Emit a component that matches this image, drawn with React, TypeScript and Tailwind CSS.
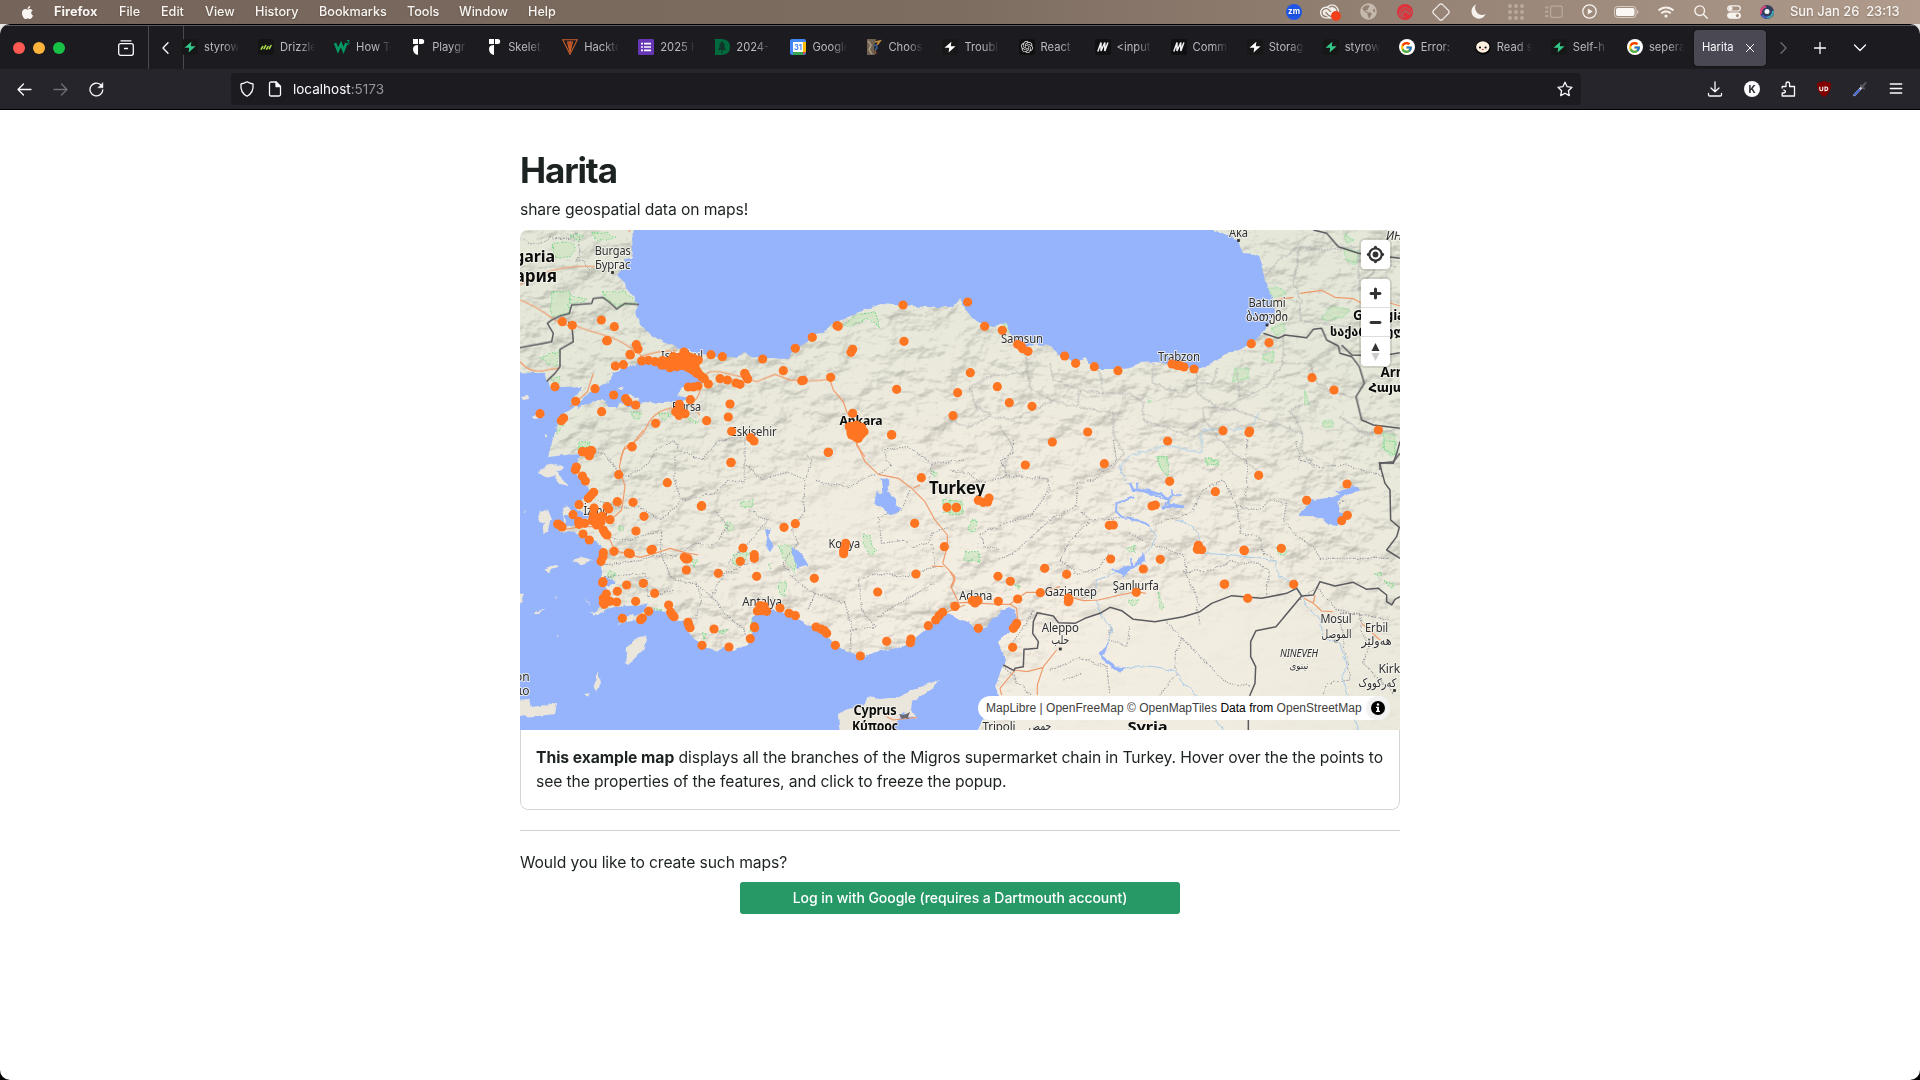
import React from 'react';
import { FaApple, FaGlobeAmericas, FaWifi } from 'react-icons/fa';
import { FcGoogle } from 'react-icons/fc';
import { SiOpenai, SiAdobecreativecloud } from 'react-icons/si';

/* ---------- menu bar ---------- */

const menus: [string, string][] = [
  ['File', 'w-[42px]'],
  ['Edit', 'w-[44px]'],
  ['View', 'w-[50px]'],
  ['History', 'w-[64px]'],
  ['Bookmarks', 'w-[88px]'],
  ['Tools', 'w-[52px]'],
  ['Window', 'w-[69px]'],
  ['Help', 'w-[40px]'],
];

const statusItems: [string, React.ReactNode][] = [
  ['w-[36px]', <span className="flex size-4 items-center justify-center rounded-full bg-[#1f56e8] pb-0.5 text-[8px] font-bold leading-none text-white">zm</span>],
  ['w-[34px]', (
    <span className="relative flex">
      <SiAdobecreativecloud className="size-[19px] text-[#f3eeea]" />
      <i className="absolute -right-0.5 bottom-0 size-2.5 rounded-full bg-[#f0401c]" />
    </span>
  )],
  ['w-[44px]', <FaGlobeAmericas className="size-[17px] text-[#c5b8ad]" />],
  ['w-[30px]', (
    <svg className="size-4" viewBox="0 0 16 16" fill="none" stroke="#9a7066" strokeWidth=".9">
      <circle cx="8" cy="8" r="8" fill="#e0303c" stroke="none" />
      <path d="M3 12A6 6 0 1 1 14.500 10M5 14A4.500 4.500 0 1 1 13 11M8 14A3 3 0 1 1 11.500 11" />
    </svg>
  )],
  ['w-[42px]', (
    <svg className="size-[18px]" viewBox="0 0 18 18" fill="none" stroke="#f3eeea" strokeWidth="1.3">
      <path d="M7.6 1.4Q9 .4 10.4 1.4L16.6 7.6Q17.6 9 16.6 10.4L10.4 16.6Q9 17.6 7.6 16.6L1.4 10.4Q.4 9 1.4 7.6Z" />
    </svg>
  )],
  ['w-[32px]', (
    <svg className="size-[15px]" viewBox="0 0 15 15"><path d="M5 .6A7.3 7.3 0 1 0 14.6 10 7 7 0 0 1 5 .6Z" fill="#f6f2ee" /></svg>
  )],
  ['w-[44px]', (
    <span className="grid grid-cols-3 gap-0.5">
      {Array.from({ length: 9 }, (_, i) => <i key={i} className="size-1 rounded-full bg-[#b9a99d]" />)}
    </span>
  )],
  ['w-[32px]', (
    <svg className="h-3.5 w-[18px]" viewBox="0 0 18 14" fill="none" stroke="#b9a99d" strokeWidth="1.3">
      <rect x="5.6" y="1.2" width="11.6" height="11.2" rx="1.5" /><path d="M.2 2.5h3M.2 6.8h3M.2 11.1h3" strokeWidth="2" />
    </svg>
  )],
  ['w-[38px]', (
    <svg className="size-[15px]" viewBox="0 0 15 15"><circle cx="7.5" cy="7.5" r="6.7" fill="none" stroke="#f6f2ee" strokeWidth="1.3" /><path d="M5.8 4.5v6l4.9-3z" fill="#f6f2ee" /></svg>
  )],
  ['w-[36px]', (
    <svg className="h-3 w-[25px]" viewBox="0 0 25 12"><rect x=".5" y=".5" width="21.5" height="11" rx="3" fill="none" stroke="#d6ccc4" /><rect x="2" y="2" width="18.5" height="8" rx="1.8" fill="#faf7f4" /><path d="M23.2 4v4q1.3-.6 1.3-2t-1.3-2Z" fill="#d6ccc4" /></svg>
  )],
  ['w-[44px]', <FaWifi className="size-4 text-[#f6f2ee]" />],
  ['w-[26px]', (
    <svg className="size-3.5" viewBox="0 0 14 14" fill="none" stroke="#f6f2ee" strokeWidth="1.4" strokeLinecap="round"><circle cx="5.7" cy="5.7" r="4.8" /><path d="m9.3 9.3 4 4" /></svg>
  )],
  ['w-[40px]', (
    <svg className="h-3.5 w-3.5" viewBox="0 0 14 14" fill="none" stroke="#f6f2ee" strokeWidth="1.2"><rect x=".7" y=".8" width="12.6" height="5.2" rx="2.6" /><circle cx="3.5" cy="3.4" r="1.5" fill="#f6f2ee" /><rect x=".7" y="8" width="12.6" height="5.2" rx="2.6" fill="#f6f2ee" /><circle cx="10.4" cy="10.6" r="1.6" fill="#a48f81" stroke="none" /></svg>
  )],
  ['w-[26px]', (
    <svg className="size-3.5" viewBox="0 0 14 14">
      <circle cx="7" cy="7" r="7" fill="#33405e" />
      <path d="M1 9A6 6 0 0 1 6 1.500" fill="none" stroke="#e0457f" strokeWidth="2.200" />
      <path d="M13 6a6 6 0 0 1-6 6.500" fill="none" stroke="#3fa9b5" strokeWidth="2" />
      <path d="M2 10a6 6 0 0 0 5 2.600" fill="none" stroke="#4a5fd0" strokeWidth="2" />
      <circle cx="7" cy="6.500" r="2.500" fill="#f4f7fb" />
    </svg>
  )],
];

function MenuBar() {
  return (
    <div className="flex h-6 shrink-0 items-center bg-linear-to-r from-[#75645a] via-[#7d6d60] to-[#b09b8c] text-[12.6px] font-medium text-[#f8f5f2] [text-shadow:0_1px_2px_rgba(0,0,0,.25)]">
      <FaApple className="ml-5 size-[15px]" />
      <span className="ml-[19px] w-[65px] text-[12.800px] font-bold">Firefox</span>
      {menus.map(([m, w]) => <span key={m} className={w}>{m}</span>)}
      <div className="ml-auto flex items-center">
        {statusItems.map(([w, icon], i) => <span key={i} className={`flex items-center justify-center ${w}`}>{icon}</span>)}
        <span className="ml-2.5 w-[130px] whitespace-pre text-[12.900px]">Sun Jan 26  23:13</span>
      </div>
    </div>
  );
}

/* ---------- favicons ---------- */

const Bolt = ({ c }: { c: string }) => (
  <svg className="size-4" viewBox="0 0 16 16"><rect width="16" height="16" rx="3" fill="#171717" /><path d="M9.4 2.800 2.500 8.800h4.700L6.600 13.400 13.600 7.200H8.800Z" fill={c} /></svg>
);
const Drizzle = () => (
  <svg className="size-4" viewBox="0 0 16 16"><rect width="16" height="16" rx="3" fill="#141414" /><path d="m3.2 10.2 1.5-2.7M6 9.6l1.7-3.1M8.6 10.2l1.5-2.7M11.3 9.6 13 6.5" stroke="#b5e84c" strokeWidth="1.5" strokeLinecap="round" /></svg>
);
const W3 = () => (
  <svg className="size-4" viewBox="0 0 16 16" fill="none" stroke="#059862"><path d="m1 4 3 7.500L7 5l2.500 6.500L12.400 4" strokeWidth="2.600" /><path d="M13 1.500h2.200l-1.300 1.700q1.400 0 1.400 1.200t-2.300 1" strokeWidth=".9" /></svg>
);
const Fmark = () => (
  <svg className="size-4" viewBox="0 0 16 16" fill="#fff"><path d="M3 0h5v5H3zM9 0h2.700A2.500 2.500 0 0 1 11.700 5H9zM8 6v10q-5-1-5-6 0-4 5-4Z" /></svg>
);
const Hack = () => (
  <svg className="size-4" viewBox="0 0 16 16" fill="none" stroke="#c9602c" strokeWidth="1.100"><path d="M.7.7h14.600L8 15.300Z" /><path d="M5.600 3 8 13l2.400-10ZM8 2v8" fill="#a3341c" /></svg>
);
const Forms = () => (
  <svg className="size-4" viewBox="0 0 16 16"><rect width="16" height="16" rx="1.500" fill="#6636b5" /><path d="M3 4.700h2M6 4.700h7M3 8h2M6 8h7M3 11.300h2M6 11.300h7" stroke="#fff" strokeWidth="1.700" /></svg>
);
const DPine = () => (
  <svg className="size-4" viewBox="0 0 16 16"><path d="M0 0h7q9 0 9 8t-9 8H0l1-1V1Z" fill="#00693e" /><path d="m8 2 3 4-1 1 2 4H8.500v3h-1v-3H4l2-4-1-1Z" fill="#12352a" /></svg>
);
const Calendar = () => (
  <svg className="size-4" viewBox="0 0 16 16"><rect width="16" height="16" rx="2" fill="#4285f4" /><path d="M13 3h3v10h-3z" fill="#fbbc04" /><path d="M3 13h10v3H3z" fill="#34a853" /><path d="M13 13h3l-3 3z" fill="#ea4335" /><path d="M3 3h10v10H3z" fill="#fff" /><text x="8" y="11" fontSize="7.500" fontWeight="700" textAnchor="middle" fill="#4285f4">31</text></svg>
);
const Painting = () => (
  <svg className="size-4" viewBox="0 0 16 16"><path d="M1 0h9l-2 7 1 9H1Z" fill="#6f6153" /><path d="m2 2 3 4-2 5 3 4" stroke="#a9977e" strokeWidth="1.600" fill="none" /><path d="m9 3 5-1-3 4" stroke="#c28a3c" strokeWidth="1.700" fill="none" /><path d="m8 7 2-1 1 3-2 2" stroke="#35598a" strokeWidth="1.800" fill="none" /><path d="m9 11 1 4" stroke="#8a5a34" strokeWidth="1.300" fill="none" /></svg>
);
const Mdn = () => (
  <svg className="size-4" viewBox="0 0 16 16"><rect width="16" height="16" rx="2" fill="#101013" /><path d="M2.800 12.500 6 3.500v8.500L9.800 3.500v8.500L12.900 3.500" fill="none" stroke="#f2f2f2" strokeWidth="1.500" strokeLinejoin="bevel" /></svg>
);
const Gpt = () => <span className="flex size-4 items-center justify-center rounded-[3px] bg-[#101010]"><SiOpenai className="size-3 text-[#e8e8e8]" /></span>;
const G = () => <span className="flex size-4 items-center justify-center rounded-full bg-white"><FcGoogle className="size-[13px]" /></span>;
const Bun = () => (
  <svg className="size-4" viewBox="0 0 16 16"><ellipse cx="8" cy="8.600" rx="7.800" ry="6.900" fill="#000" /><ellipse cx="7.800" cy="8" rx="6.700" ry="5.700" fill="#fbf0df" /><circle cx="5" cy="8.500" r="1.100" /><circle cx="10.600" cy="8.500" r="1.100" /><path d="M6.500 10q1.300 1.800 2.600 0Z" fill="#b71422" /></svg>
);

const green = '#34c98b';
const tabs: [React.ReactNode, string][] = [
  [<Bolt c={green} />, 'styrow'], [<Drizzle />, 'Drizzle'], [<W3 />, 'How To'], [<Fmark />, 'Playgr'], [<Fmark />, 'Skelet'],
  [<Hack />, 'Hackto'], [<Forms />, '2025 H'], [<DPine />, '2024-'], [<Calendar />, 'Google'], [<Painting />, 'Choos'],
  [<Bolt c="#fff" />, 'Troubl'], [<Gpt />, 'React'], [<Mdn />, '<input'], [<Mdn />, 'Comm'], [<Bolt c="#fff" />, 'Storag'],
  [<Bolt c={green} />, 'styrow'], [<G />, 'Error: '], [<Bun />, 'Read s'], [<Bolt c={green} />, 'Self-h'], [<G />, 'sepera'],
];

const ln = { fill: 'none', stroke: '#fbfbfe', strokeWidth: 1.3, strokeLinecap: 'round', strokeLinejoin: 'round' } as const;

function TabBar() {
  return (
    <div className="flex h-11 items-center border-t border-[#5a595f] bg-[#1c1b20] text-[11.200px] text-[#b9b9be]">
      <div className="ml-[13px] flex gap-2">
        <i className="size-3 rounded-full bg-[#ff5a52]" />
        <i className="size-3 rounded-full bg-[#fdb43c]" />
        <i className="size-3 rounded-full bg-[#18c146]" />
      </div>
      <svg className="ml-[53px] size-4" viewBox="0 0 16 16" {...ln}><path d="M3 .8h10" /><rect x=".7" y="3.600" width="14.600" height="11.700" rx="2" /><path d="M6.500 8.500h3" /></svg>
      <div className="ml-[14px] flex h-full w-9 items-center justify-center border-x border-[#4a494f]">
        <svg className="size-3" viewBox="0 0 12 12" {...ln}><path d="M8 .7 3 6l5 5.300" /></svg>
      </div>
      <div className="-ml-0.5 flex">
        {tabs.map(([icon, label], i) => (
          <div key={i} className="flex w-[76.050px] shrink-0 items-center gap-1.5">
            {icon}
            <span className="w-[36px] overflow-hidden whitespace-nowrap [mask-image:linear-gradient(to_right,#000_55%,transparent_98%)]">{label}</span>
          </div>
        ))}
      </div>
      <div className="-ml-[9px] flex h-9 w-[72px] items-center rounded bg-[#4a4853] pl-2 text-[#fbfbfe] shadow-[0_0_2px_rgba(0,0,0,.6)]">
        Harita
        <svg className="ml-auto mr-3 size-2" viewBox="0 0 8 8" {...ln} strokeWidth={1}><path d="m.3.3 7.400 7.400M7.700.3.3 7.700" /></svg>
      </div>
      <svg className="ml-3 size-3" viewBox="0 0 12 12" {...ln} stroke="#6d6c73"><path d="m3 .7 5 5.300-5 5.300" /></svg>
      <svg className="ml-6 size-3" viewBox="0 0 12 12" {...ln}><path d="M6 .5v11M.5 6h11" /></svg>
      <svg className="ml-[28px] size-3" viewBox="0 0 12 12" {...ln}><path d="m.5 3 5.500 5.500L11.500 3" /></svg>
    </div>
  );
}

function Toolbar() {
  return (
    <div className="flex h-10 items-center bg-[#26252b]">
      <svg className="ml-[17px] size-[15px]" viewBox="0 0 15 15" {...ln}><path d="M14 7.500H1M6.500 2 1 7.500 6.500 13" /></svg>
      <svg className="ml-[21px] size-[15px]" viewBox="0 0 15 15" {...ln} stroke="#6f6e75"><path d="M1 7.500h13M8.500 2 14 7.500 8.500 13" /></svg>
      <svg className="ml-[21px] size-[15px]" viewBox="0 0 15 15" {...ln}><path d="M13.800 8a6.400 6.400 0 1 1-2.300-5.400" /><path d="M14 .8v5H9Z" fill="#fbfbfe" strokeWidth=".4" /></svg>
      <div className="ml-[127px] flex h-8 w-[1350px] items-center rounded bg-[#1c1b20] text-[13.500px]">
        <svg className="ml-2 size-4" viewBox="0 0 16 16" {...ln}><path d="M8 .8q3 1.700 6 2.200Q15 11.500 8 15.200 1 11.500 2 3 5 2.500 8 .8Z" /></svg>
        <svg className="ml-3 size-4" viewBox="0 0 16 16" {...ln}><path d="M4 1h5l4.500 4.500V13.500q0 1.500-1.500 1.500H4q-1.500 0-1.500-1.500V2.500Q2.500 1 4 1Z" /><path d="M9 1v4.500h4.500Z" fill="#fbfbfe" /></svg>
        <span className="ml-2.5 text-[#fbfbfe]">localhost<span className="text-[#96959b]">:5173</span></span>
        <svg className="ml-auto mr-2 size-4" viewBox="0 0 16 16" {...ln}><path d="m8 1.200 2.100 4.500 4.900.6-3.600 3.400.9 4.900L8 12.200l-4.300 2.400.9-4.900L1 6.300l4.900-.6Z" /></svg>
      </div>
      <div className="ml-[126px] flex items-center gap-5">
        <svg className="size-4" viewBox="0 0 16 16" {...ln}><path d="M8 .8v9.700M4 7l4 3.700L12 7M1.500 12.500v1.200q0 1.300 1.300 1.300h10.400q1.300 0 1.300-1.300v-1.200" /></svg>
        <span className="ml-[1px] flex size-4 items-center justify-center rounded-full bg-[#fbfbfe] text-[10px] font-bold text-[#26252b]">K</span>
        <svg className="size-4" viewBox="0 0 16 16" {...ln}><path d="M2.200 7V5.500H6V3q0-2 1.800-2t1.800 2v2.500h4.900V15H2.200v-3h1.600q1.600 0 1.600-1.400T3.800 9.200" /></svg>
        <svg className="size-4" viewBox="0 0 16 16"><path d="M8 0q4 1.700 7 1.700Q15.500 12 8 16 .5 12 1 1.700 4 1.700 8 0Z" fill="#800000" /><path d="M3.800 5.800v2.400q0 1.500 1.500 1.500t1.500-1.500V5.800M9 6v3.600h.8q2 0 2-1.800T9.800 6Z" fill="none" stroke="#fff" strokeWidth="1.100" /></svg>
        <svg className="size-4" viewBox="0 0 16 16"><path d="m2.500 14 7-7.500" stroke="#cfd5e2" strokeWidth="2.400" strokeLinecap="round" /><path d="m2.600 13.800 4.600-5" stroke="#4062d8" strokeWidth="1.800" strokeLinecap="round" /><path d="m9 4.500 3 3M10.500 5.500l3-3.500" stroke="#55555a" strokeWidth="2.200" strokeLinecap="round" /></svg>
        <svg className="size-4" viewBox="0 0 16 16" {...ln}><path d="M2.300 3h11.400M2.300 7.500h11.400M2.300 12h11.400" /></svg>
      </div>
    </div>
  );
}

/* ---------- map ---------- */

/* Map features are kept in four sheets, three units to a pixel, each with its own origin. */
type Sheet = { at: string; dots: string; roads: string[]; provinces: string[]; borders: string[]; parks: string[]; rivers: string[]; lakes: string[]; clusters: string[] };

const sheets: Sheet[] = [
  {
    at: 'translate(510 140) scale(.33333)',
    dots: '157,545 187,556 274,540 313,560 290,602 292,602 379,614 384,627 361,645 360,643 316,678 340,674 395,663 415,661 435,665 455,675 470,665 490,650 522,636 500,680 520,670 540,665 565,660 545,685 560,700 575,710 583,716 595,732 530,650 480,683 457,662 550,655 535,741 550,741 564,738 603,644 637,650 758,657 820,692 880,721 875,722 962,712 704,700 713,717 708,708 630,716 652,720 678,729 690,733 856,625 907,592 981,557 985,559 1179,495 1182,604 1028,628 1023,637 135,740 255,746 197,784 311,765 347,776 354,785 377,795 90,821 161,834 154,842 275,815 437,850 541,779 508,793 508,805 497,815 507,826 525,821 590,842 660,792 655,831 665,874 722,893 732,903 366,920 217,935 243,932 237,945 955,937 1145,884 1028,820 1160,748 1343,758 1329,827 1018,860 1030,875 1055,862 1062,875 1050,885 1045,895 1025,885 1040,855 1035,870 663,967',
    clusters: ['M445 662 500 640 530 632 572 652 568 680 592 715 565 715 520 690 450 688Z', 'M1008 852 1040 842 1073 868 1066 890 1045 909 1030 903 1010 885Z'],
    roads: ['M30 480Q80 500 120 530T190 555Q240 575 300 590 350 610 405 655', 'M30 433Q100 390 170 383T255 380', 'M30 665Q60 700 100 692T148 684', 'M250 700 232 755 195 790 180 800', 'M390 650Q450 630 500 632', 'M590 715Q580 690 630 695L700 712 740 725 795 703 840 720 880 722 920 722 960 718 970 750 1000 785 1010 815 1030 850 1040 915 1065 950', 'M570 750Q565 780 540 790T480 805Q430 815 410 860T345 920L330 960', 'M540 790 570 825', 'M355 275Q362 270 362 268'],
    provinces: ['M40 300Q80 330 120 290 170 310 200 280 220 330 200 360 250 370 230 420 270 440', 'M30 440Q60 480 90 470 100 510 140 520M30 530Q70 540 80 580L60 600 30 610', 'M235 500Q250 560 230 600T240 700 225 740 210 745', 'M300 660Q340 600 330 590T400 575', 'M590 650Q620 690 600 700T560 760 700 750 760 770 790 850 870 850 900 870', 'M640 650Q720 690 760 660M690 770 720 810 700 850 640 850', 'M830 700Q870 720 890 745L900 760 960 740M850 660Q930 640 940 620L980 590 1090 570', 'M900 870 930 920 890 960M980 590 990 650 960 690 1010 760 1120 760 1160 790 1210 790 1230 720 1180 680 1130 690 1040 700', 'M1240 500Q1260 540 1230 580L1270 640 1290 680 1345 660', 'M1160 790 1180 830 1110 890 1120 950M1210 790 1280 840 1345 850M1345 700 1300 720 1280 780', 'M410 810Q430 860 480 870T560 880 620 850M480 870 470 940 510 950M700 850Q690 900 700 940', 'M120 280 110 340 160 370 190 420M200 280 280 300 350 295', 'M395 690 425 718', 'M1245 500 1260 600 1180 640 1120 650'],
    borders: ['M30 623 60 617 100 610 125 605 130 580 112 550 125 540 150 528 178 520 185 495 245 490 250 475 278 472 300 488 320 507 345 490 387 493', 'M175 545 187 570 190 605 150 628 150 680 135 700 110 724'],
    parks: ['M130 455h50l-5 65-45 10-10-30z', 'M185 465 230 480 210 490 180 490z', 'M280 455 340 455 380 490 320 500 285 475z', 'M130 310 180 305 200 325 180 350 140 355 130 335z', 'M245 280h50l20 15-50 5z', 'M90 655 150 630 140 680 110 670z', 'M1000 555 1040 525 1095 515 1110 560 1070 535 1010 562z', 'M445 820 485 822 460 840z', 'M360 815 395 820 385 838 365 830z', 'M205 910 240 905 235 925 205 928z', 'M140 800 158 800 145 830 160 850 140 880 130 850z', 'M530 830 565 845 545 850z', 'M180 285 220 285 205 305z', 'M120 715 150 710 145 735z'],
    rivers: [], lakes: [],
  },
  {
    at: 'translate(950 220) scale(.33333)',
    dots: '53,246 104,319 157,331 203,373 213,378 218,386 234,394 344,408 377,430 433,440 504,452 666,432 680,436 690,437 702,441 732,447 904,371 957,368 1086,473 1152,510 1285,630 61,458 142,500 178,548 246,559 413,636 307,666 226,735 463,731 653,663 819,632 899,633 897,638',
    clusters: [],
    roads: ['M975 240Q1000 235 1030 232M1050 220 1115 211 1155 232 1210 236 1235 250 1290 240 1350 258'],
    provinces: ['M200 365Q240 400 230 450L240 500 300 540 380 560 390 510 460 520 450 460 430 430', 'M230 455 120 470 60 500 80 560 130 590 190 600 300 545', 'M390 560 490 580 490 640 520 700 490 745M460 520 540 520 580 550 580 600 700 640 760 600 760 560 860 570', 'M610 430 610 490 690 520 740 490 790 490 800 440M740 450 740 520 800 560', 'M860 450 870 540 950 500 1000 430 1000 340M1000 430 1080 430 1100 490 1170 520 1230 540', 'M860 570 940 600 1060 640 1020 570 1100 540M940 180Q970 130 1000 110L1050 80 1120 90 1220 80', 'M1050 80 1030 190 1060 250M1000 230 1050 250 1050 300 1100 310 1200 320 1230 350M1225 90 1225 210 1280 140 1340 140', 'M150 620 190 680 160 745M0 600 60 620 120 590M300 430 310 480 390 510', 'M1060 640 1050 690 1100 750M1170 590 1240 640 1350 630M760 600 850 700 920 750'],
    borders: ['M940 340 985 355 1005 345 1070 353 1090 328 1115 325 1130 360 1165 378 1170 400 1205 410 1228 440 1243 490 1218 530 1235 600 1270 615 1350 625', 'M1175 375 1205 405 1290 408 1350 398', 'M1090 30 1130 40 1165 80 1225 100 1350 115', 'M1350 700 1330 725 1290 730 1290 750'],
    parks: ['M955 205 985 205 1010 220 970 235z', 'M1115 290 1150 260 1200 270 1180 290 1130 300z', 'M855 445 895 445 895 475 848 485z', 'M940 405 970 395 965 425 938 418z', 'M160 310 185 315 185 340 165 330z', 'M1185 85 1225 95 1220 130 1190 125z', 'M1118 605 1148 603 1145 622 1118 618z', 'M1300 640 1335 645 1340 700 1320 710 1298 680z', 'M1065 515 1080 550 1060 550z', 'M965 325 1000 310 1005 330 980 345z', 'M622 710 652 712 640 750 630 740z', 'M765 715 805 722 800 738 770 732z', 'M1185 45 1215 60 1190 70z', 'M590 540 605 545 598 550z'],
    rivers: ['M925 580Q910 630 860 628T760 630Q745 640 755 670T740 695L660 678Q600 690 560 700T510 745'],
    lakes: [],
  },
  {
    at: 'translate(515 430) scale(.33333)',
    dots: '351,50 648,98 940,67 1130,15 203,65 220,64 230,62 223,77 184,111 181,119 202,138 211,153 311,134 457,158 560,227 559,229 236,187 228,196 220,205 307,215 354,217 192,224 237,234 276,230 281,237 387,259 174,254 285,269 363,303 128,282 134,285 141,291 191,274 192,283 209,280 235,255 235,265 252,265 262,258 232,272 245,285 258,275 204,312 223,330 265,300 270,309 276,315 265,368 264,380 258,394 297,364 340,369 346,371 408,360 412,358 508,382 513,387 519,386 514,420 684,354 676,394 718,374 718,385 725,439 610,430 807,292 841,281 992,340 990,352 986,362 986,371 898,445 1088,486 1203,432 1199,280 1219,143 1296,232 1324,232 1288,350 1320,529 1283,547 1272,557 1262,570 1240,587 1188,627 1186,638 1115,634 1036,678 961,646 903,591 918,597 928,602 935,610 841,557 822,550 795,534 735,527 747,528 727,543 755,544 740,542 718,590 719,593 706,626 642,651 561,646 597,597 519,577 521,585 525,593 467,547 472,555 477,560 461,525 419,490 385,460 335,465 307,484 264,455 263,458 274,492 265,505 265,518 268,523 285,514 305,516 362,514 322,565 401,544 382,564 377,569',
    clusters: ['M225 250 265 250 270 275 245 298 222 280Z'],
    roads: ['M385 0 350 45 325 60 313 110 330 170 320 240 285 272', 'M150 298 200 290 245 290 285 330 300 362 375 382 420 370 465 355 510 368 550 375', 'M1025 40 1050 95 1090 133 1150 145 1190 175 1230 215 1260 270 1297 315 1297 350 1283 400 1320 440 1308 470 1330 515', 'M1195 175 1215 165M1250 408 1285 410M1260 560 1350 525', 'M1115 860 1135 870 1205 862'],
    provinces: ['M225 70Q280 60 310 130L340 140 400 100 420 60 480 30 490 60 560 90 600 40 660 20', 'M480 80 480 160 500 210 600 190 640 150 690 160 690 80 690 20', 'M690 100 740 150 820 125 870 150 890 90 860 60M870 150 865 250 830 300 850 340', 'M900 155 1000 170 1060 140 1080 130M1185 180 1160 240 1090 260 1100 340 1170 330 1190 350 1240 340 1250 310 1300 290', 'M240 210 330 235 370 230 440 270 500 215M440 300 340 330 290 325M440 300 440 370 480 380 540 340 600 345 640 290 600 240', 'M250 405 320 400 440 375 460 430 480 450 540 460 590 500 630 430 700 400', 'M270 440 390 430 400 500 480 480M700 240 760 270 700 340 640 400M850 340 800 400 840 450 900 490 880 540', 'M900 490 990 520 1010 590 1005 660M1030 450 1080 430 1180 440 1260 410 1250 340M1030 450 1040 540 1080 590 1010 600M1090 560 1150 520 1260 460', 'M1100 60 1130 110 1090 130M1100 60 1180 50 1250 100 1350 90M1250 100 1240 160M590 500 640 560 690 600 700 640', 'M540 460 560 500 540 570'],
    borders: [],
    parks: ['M675 220 718 212 712 230 682 230z', 'M1045 312 1068 318 1070 345 1088 362 1060 375 1045 340z', 'M790 348 825 345 840 385 838 425 815 400z', 'M790 460 812 452 815 470 805 495 790 480z', 'M655 375 700 368 690 390 655 405z', 'M530 390 552 385 540 410z', 'M635 275 657 290 645 302 633 290z', 'M280 422 302 430 295 442 278 438z', 'M1283 210 1338 215 1330 245 1290 250z', 'M1245 125 1268 130 1255 140z', 'M190 55 210 35 228 50z', 'M315 285 330 290 325 302 312 300z', 'M605 605 640 598 625 608z', 'M712 560 718 600 705 605z', 'M1050 800 1072 802 1065 820 1050 815z', 'M760 400 770 410 765 418z', 'M560 605 575 610 568 625z', 'M415 535 440 540 425 545z'],
    rivers: [],
    lakes: ['M1100 140 1120 152 1117 185 1142 205 1145 228 1160 235 1130 257 1103 235 1078 220 1085 187 1105 190Z', 'M750 300 767 295 762 325 776 345 765 370 750 350 757 325Z', 'M828 350 860 372 880 405 845 413Z'],
  },
  {
    at: 'translate(950 440) scale(.33333)',
    dots: '117,174 85,181 100,187 113,186 19,203 659,124 616,195 606,198 478,256 490,255 796,155 926,106 1070,181 1191,132 1192,226 1175,242 482,357 631,358 580,387 745,316 742,328 755,329 883,332 882,330 994,325 824,432 823,433 1031,433 893,475 559,457 284,385 350,403 271,458 355,474 357,480 355,485 145,484 144,409 181,424 203,477 67,482 75,489 84,482 15,499 85,565 200,550 197,556 190,565 188,622',
    clusters: [],
    roads: ['M0 490 50 487 145 493 180 493 203 475 230 457 265 457 300 450 330 440M180 493 200 505 203 550M355 470 400 482 445 480 510 465 560 455 587 460', 'M320 630 280 680 262 735 262 765M280 682 230 695 195 690 150 745 155 765M0 395 15 420 5 440', 'M1062 475 1090 490 1115 513 1148 515M1090 490 1095 465M1235 550 1290 600'],
    provinces: ['M190 0 190 40 155 60 170 110 290 115 300 150 240 230 180 245 90 280 100 320 150 330', 'M170 110 90 130 60 100 0 90M490 0 500 60 430 120 380 130 380 200 420 240 540 230', 'M420 240 360 300 330 360 380 400 440 390 480 340M540 280 600 310 700 345 710 400 750 500M620 250 720 220 760 150 820 120 860 200 930 210 960 180', 'M700 395 790 390 840 365 930 370 960 400 950 430 950 465M860 200 870 280 930 290 940 340 970 355', 'M960 180 1010 190 1000 240 1040 290 1090 320 1110 355 1320 355M1040 0 1050 60 1110 80 1190 75 1300 110', 'M890 0 890 180M250 515 180 620M540 560 530 620 480 600 480 550', 'M650 545 695 595 675 650 680 700 630 765M695 595 760 660 830 730 900 737', 'M300 690 390 655 470 680 480 765M340 720 400 700M160 680 210 730 240 765', 'M1170 520 1230 520 1235 580 1260 610 1240 670 1330 760M1120 765 1130 730 1200 720 1170 540M1050 480 1100 440 1160 510 1320 540', 'M740 500 750 550M380 200 300 240 200 330 150 360M1130 240 1180 180'],
    borders: ['M160 675 192 692 195 685 220 680 222 628 262 625 265 605 248 580 250 545 262 518 310 528 325 548 375 550 405 535 450 520 480 502 515 512 550 538 615 545 700 530 750 515 785 490 845 467 935 475 1010 460 1040 445 1055 468 1090 465 1110 425 1155 438 1210 427 1250 448 1285 445 1310 465 1310 485 1325 495 1335 478 1350 470', 'M1055 468 978 560 918 572 902 605 902 650 917 680 915 730 900 765 895 800 895 870', 'M1350 5 1340 40 1330 70 1288 68 1305 130 1320 150 1322 240 1348 262 1340 290 1310 330 1350 355'],
    parks: ['M620 50 650 50 655 110 635 90z', 'M765 55 808 65 800 75 770 72z', 'M45 335 85 335 88 365 45 360z', 'M55 275 65 240 82 245 70 275z', 'M528 325 555 315 553 335 532 335z', 'M625 458 640 490 640 510 630 505z', 'M537 478 565 482 555 495 540 492z', 'M0 180 35 185 40 220 0 225z', 'M980 320 1012 325 1008 343 985 345z', 'M1300 420 1330 430 1325 448z', 'M1270 398 1295 402 1285 412z', 'M1300 0 1335 5 1335 45 1305 30z', 'M195 435 212 438 205 448z'],
    rivers: ['M675 240Q740 250 745 290L760 340 850 345 975 362 985 410 1020 420 1045 445 1070 500 1110 540 1120 590 1170 610 1190 680 1175 710 1195 765', 'M600 260 620 290 590 340M500 400 440 420 430 460 450 520 485 570 475 610', 'M520 685Q580 670 640 685T690 710 745 767', 'M1205 800 1225 870M800 840 820 870', 'M510 80 515 100 550 150'],
    lakes: ['M1045 225 1085 180 1150 172 1170 160 1150 152 1185 150 1210 138 1232 147 1180 170 1165 182 1168 210 1182 225 1165 258 1135 255 1120 235 1092 232 1055 230Z', 'M640 205 670 185 678 195 705 198 695 205Z', 'M495 395 530 378 560 375 570 350 582 340 585 365 540 388 520 412Z', 'M478 605 460 650 500 678 525 683 510 698 455 660 450 635Z'],
  },
];

const reservoirs = [
  ['M540 130 550 150 580 150 640 165 655 180 640 205', 7], ['M560 125 562 150 600 160 655 180 668 165 695 165M668 165 665 148', 5],
  ['M655 190 700 200', 6], ['M550 172 500 190 498 215 520 235 560 240 600 258', 6], ['M485 385 515 400 550 378 580 360 580 335M545 380 540 355', 7],
] as const;

const seas = [
  'M634 229 632 240 633 250 632 258 624 259 627 268 622 269 617 275 625 283 626 288 633 297 638 304 635 310 636 316 640 323 648 333 663 342 683 350 697 353 723 357 740 357 743 352 750 356 763 358 789 359 793 352 812 338 820 333 837 322 857 313 883 303 903 305 923 307 950 307 957 303 960 298 965 308 972 318 980 323 993 327 1005 322 1010 333 1017 342 1028 347 1033 344 1045 345 1053 349 1060 355 1075 363 1085 357 1090 363 1100 369 1117 369 1130 367 1140 363 1157 362 1177 365 1193 370 1210 365 1227 354 1243 348 1253 342 1263 333 1270 323 1274 315 1273 300 1267 287 1263 273 1260 258 1256 254 1243 253 1238 242 1228 235 1210 229Z',
  'M577 405 590 392 608 383 613 373 623 368 635 365 643 360 660 365 687 370 700 377 705 383 697 387 683 388 677 395 692 397 680 402 663 403 643 402 637 407 627 407 620 402 617 407 608 407 605 400 590 402 578 408Z',
  'M520 372 530 373 545 373 550 387 563 388 582 387 577 395 570 402 577 405 574 408 565 412 558 423 552 443 548 457 566 455 580 453 578 462 572 465 575 473 583 482 588 488 590 493 583 500 575 505 577 510 583 513 595 515 590 519 580 520 577 525 567 527 565 518 566 510 562 508 564 522 565 528 558 530 566 532 575 533 585 538 602 545 603 553 597 563 601 565 602 577 612 578 615 583 605 587 608 592 598 600 603 603 593 615 602 610 615 607 642 605 648 602 642 613 625 620 616 624 643 619 652 609 665 612 675 620 685 622 688 630 693 638 702 645 715 651 725 648 735 650 748 645 753 630 752 617 757 612 775 610 795 617 812 627 825 633 835 645 848 652 862 657 875 652 898 648 910 642 925 630 935 620 948 613 958 618 970 623 978 630 987 627 990 620 997 617 1003 609 1010 607 1015 610 1017 620 1012 630 1004 636 998 642 1001 650 1005 660 1000 673 995 687 1000 698 992 708 983 720 975 735H510V372Z',
];

const islands = [
  'M840 735 838 715 845 710 852 708 859 706 865 705 867 697 880 699 898 697 918 688 940 679 932 688 921 696 912 702 911 710 917 718 902 713 898 720 892 728 888 735Z',
  'M538 473 545 466 552 463 565 467 556 472 562 478 570 486 560 484 554 476 545 478Z',
  'M540 512 548 510 551 517 548 530 542 533 544 523 538 520Z', 'M562 508 568 506 573 516 566 516Z',
  'M572 560 582 557 592 560 583 565Z', 'M544 570 555 565 559 566 549 572Z', 'M625 650 630 644 638 637 647 636 643 650 628 665 625 663 627 657Z',
  'M598 672 600 684 597 692 594 685Z', 'M515 700 530 699 532 707 545 705 557 703 555 714 538 716 515 717Z', 'M515 593 524 594 523 602 515 603Z',
  'M590 613 606 608 598 615Z', 'M618 619 634 615 632 620 620 621Z', 'M533 614 545 608 538 614Z', 'M585 598 590 606 587 603Z', 'M532 416 541 413 543 417 535 419Z', 'M521 397 528 396 529 399 523 400Z',
  'M616 389 624 386 622 389Z', 'M545 437 547 438 545 438Z', 'M584 694 590 693 587 696Z', 'M557 635 559 636 557 637Z', 'M525 509 526 512 525 512Z', 'M627 394 640 400 632 403Z', 'M555 595 557 598 556 599Z', 'M545 435 548 437 545 437Z',
];

type Label = { t: string; x: number; y: number; w?: number; s?: number; b?: boolean; i?: boolean; a?: 'start' | 'end' };
const labels: Label[] = [
  { t: 'Bulgaria', x: 555, y: 261.500, s: 16, b: true, a: 'end' }, { t: 'България', x: 557, y: 282, s: 17, b: true, a: 'end' },
  { t: 'Burgas', x: 612.700, y: 255, w: 36 }, { t: 'Бургас', x: 612.700, y: 268.700, w: 35.500 },
  { t: 'Istanbul', x: 682, y: 360, w: 42 }, { t: 'Bursa', x: 686.500, y: 411, w: 29 }, { t: 'Eskisehir', x: 753.500, y: 435.700, w: 46 },
  { t: 'Ankara', x: 861, y: 424.600, w: 43, b: true }, { t: 'Samsun', x: 1022, y: 343, w: 42 }, { t: 'Trabzon', x: 1179, y: 360.700, w: 42 },
  { t: 'Batumi', x: 1267, y: 307.300, w: 37 }, { t: 'ბათუმი', x: 1267, y: 320.500, w: 42 }, { t: 'Aka', x: 1238.500, y: 236.700, w: 19 },
  { t: 'ИН', x: 1394, y: 239.500, w: 16, i: true }, { t: 'Georgia', x: 1353, y: 320, s: 13.500, b: true, a: 'start' },
  { t: 'საქართველო', x: 1330, y: 335.500, s: 12.800, b: true, a: 'start' }, { t: 'Armenia', x: 1380.500, y: 376.500, s: 13.500, b: true, a: 'start' },
  { t: 'Հայաստան', x: 1368.500, y: 391.500, s: 13, b: true, a: 'start' }, { t: 'Turkey', x: 957, y: 494, w: 56, s: 17, b: true },
  { t: 'İzmir', x: 596.500, y: 515.300, w: 26 }, { t: 'Konya', x: 844.300, y: 548.300, w: 31.500 }, { t: 'Antalya', x: 762, y: 605.700, w: 39.500 },
  { t: 'Cyprus', x: 875, y: 715, w: 43, s: 13.500, b: true }, { t: 'Κύπρος', x: 875, y: 730.700, w: 46, s: 13.500, b: true },
  { t: 'Heraklion', x: 529.500, y: 681, a: 'end' }, { t: 'Ηράκλειο', x: 529.500, y: 694.700, a: 'end' },
  { t: 'Adana', x: 975.700, y: 599.700, w: 33 }, { t: 'Gaziantep', x: 1070.700, y: 596, w: 52 }, { t: 'Şanlıurfa', x: 1135.700, y: 590, w: 46 },
  { t: 'Aleppo', x: 1060.300, y: 631.700, w: 37 }, { t: 'حلب', x: 1060.300, y: 644, w: 18 },
  { t: 'Mosul', x: 1336, y: 623.300, w: 31 }, { t: 'الموصل', x: 1336.500, y: 637.500, w: 30 },
  { t: 'Erbil', x: 1376.500, y: 631.700, w: 23 }, { t: 'ھەولێر', x: 1376.500, y: 645, w: 30 },
  { t: 'NINEVEH', x: 1299, y: 656.700, w: 38, s: 10.500, i: true }, { t: 'نينوى', x: 1299, y: 669, w: 19, s: 10 },
  { t: 'Kirkuk', x: 1378.500, y: 672.700, a: 'start' }, { t: 'کەرکووک', x: 1377.500, y: 687, w: 38 },
  { t: 'Tripoli', x: 999, y: 730.500, w: 33 }, { t: 'حمص', x: 1040, y: 729.500, w: 23 }, { t: 'Syria', x: 1147.500, y: 732, w: 40, s: 14, b: true },
];

const townMarks = [[612.5, 272.5], [1238.5, 240.5], [1267, 325], [1060.3, 649], [1336, 641], [1394.5, 690.5]];

function MapCanvas() {
  return (
    <svg className="block h-[500px] w-full" viewBox="520 230 880 500" preserveAspectRatio="none">
      <defs>
        <radialGradient id="ground" gradientUnits="userSpaceOnUse" cx="0" cy="0" r="1" gradientTransform="translate(1010 620) scale(540 340)">
          <stop offset="0" stopColor="#f5efe3" /><stop offset=".5" stopColor="#f1ece0" /><stop offset="1" stopColor="#e5e7d9" />
        </radialGradient>
        <radialGradient id="flat" gradientUnits="userSpaceOnUse" cx="0" cy="0" r="1" gradientTransform="translate(1220 735) scale(260 170)">
          <stop offset="0" stopColor="#000" /><stop offset=".75" stopColor="#222" /><stop offset="1" stopColor="#fff" />
        </radialGradient>
        <radialGradient id="plateau" gradientUnits="userSpaceOnUse" cx="0" cy="0" r="1" gradientTransform="translate(860 510) scale(130 90)">
          <stop offset="0" stopColor="#000" stopOpacity=".75" /><stop offset="1" stopColor="#000" stopOpacity="0" />
        </radialGradient>
        <mask id="hills" maskUnits="userSpaceOnUse" x="520" y="230" width="880" height="500">
          <rect x="520" y="230" width="880" height="500" fill="url(#flat)" />
          <rect x="520" y="230" width="880" height="500" fill="url(#plateau)" />
        </mask>
        <filter id="relief" filterUnits="userSpaceOnUse" x="520" y="230" width="880" height="500" colorInterpolationFilters="sRGB">
          <feTurbulence type="fractalNoise" baseFrequency=".032 .044" numOctaves="4" seed="11" result="n" />
          <feDiffuseLighting in="n" surfaceScale="7" diffuseConstant="1.2" lightingColor="#fff"><feDistantLight azimuth="235" elevation="56" /></feDiffuseLighting>
        </filter>
        <filter id="coast" filterUnits="userSpaceOnUse" x="515" y="225" width="890" height="510">
          <feTurbulence type="fractalNoise" baseFrequency=".14" numOctaves="2" seed="4" />
          <feDisplacementMap in="SourceGraphic" scale="4.500" xChannelSelector="R" yChannelSelector="G" />
        </filter>
      </defs>
      <rect x="520" y="230" width="880" height="500" fill="url(#ground)" />
      <g mask="url(#hills)" opacity=".26" className="mix-blend-multiply"><rect x="520" y="230" width="880" height="500" filter="url(#relief)" /></g>
      <g filter="url(#coast)">
        {sheets.map((s) => (
          <g key={s.at} transform={s.at} fill="none" strokeLinejoin="round">
            <path d={s.parks.join('')} fill="#cfe6c2" fillOpacity=".75" stroke="#5fd57a" strokeWidth="2.500" strokeDasharray="5 4" />
            <path d={s.provinces.join('')} stroke="#9c9ca2" strokeWidth="3.500" strokeDasharray="4 4" />
            <path d={s.rivers.join('')} stroke="#a9cbe8" strokeWidth="3" />
            <path d={s.lakes.join('')} fill="#96b4fc" />
          </g>
        ))}
        <g transform={sheets[3].at} fill="none" stroke="#96b4fc">{reservoirs.map(([d, w]) => <path key={d} d={d} strokeWidth={w} />)}</g>
        {seas.map((d) => <path key={d} d={d} fill="#96b4fc" />)}
        {islands.map((d) => <path key={d} d={d} fill="#ebe6dc" />)}
      </g>
      {sheets.map((s) => (
        <g key={s.at} transform={s.at} fill="none" strokeLinejoin="round">
          <path d={s.roads.join('')} stroke="#ee9a6a" strokeWidth="3.500" />
          <path d={s.borders.join('')} stroke="#5c5b60" strokeWidth="4.500" />
        </g>
      ))}
      <path d="m899 714 5 1 6-3-2 5 1 2-4-1-3 1Z" fill="#6a6a6e" />
      {townMarks.map(([x, y]) => <rect key={x} x={x - 1.4} y={y - 1.4} width="2.800" height="2.800" fill="#333" />)}
      {labels.map((l) => (
        <text key={l.t} x={l.x} y={l.y} fontSize={l.s ?? 12} fontWeight={l.b ? 700 : 400} fontStyle={l.i ? 'italic' : 'normal'}
          fontFamily='"Noto Sans", "DejaVu Sans", sans-serif' textAnchor={l.a ?? 'middle'} textLength={l.w} lengthAdjust="spacingAndGlyphs"
          fill={l.b ? '#0c0c0c' : '#2e2e32'} stroke="#f5f3ec" strokeOpacity=".85" strokeWidth="2" strokeLinejoin="round" paintOrder="stroke">{l.t}</text>
      ))}
      {sheets.map((s) => (
        <g key={s.at} transform={s.at} fill="#ff7522">
          {s.clusters.map((d) => <path key={d} d={d} />)}
          {s.dots.split(' ').map((p, i) => <circle key={i} cx={p.split(',')[0]} cy={p.split(',')[1]} r="13.800" />)}
        </g>
      ))}
    </svg>
  );
}

const ctl = 'flex size-[29px] items-center justify-center';

function MapView() {
  return (
    <div className="relative h-[500px]">
      <MapCanvas />
      <div className="absolute right-[10px] top-[10px] flex flex-col gap-2.5">
        <div className="rounded bg-white shadow-[0_0_0_2px_rgba(0,0,0,.1)]">
          <div className={ctl}>
            <svg className="size-[29px]" viewBox="0 0 20 20" fill="#333"><path d="M10 4C9 4 9 5 9 5v.1A5 5 0 0 0 5.100 9H5s-1 0-1 1 1 1 1 1h.1A5 5 0 0 0 9 14.900v.1s0 1 1 1 1-1 1-1v-.1a5 5 0 0 0 3.900-3.900h.1s1 0 1-1-1-1-1-1h-.1A5 5 0 0 0 11 5.100V5s0-1-1-1m0 2.500a3.500 3.500 0 1 1 0 7 3.500 3.500 0 1 1 0-7" /><circle cx="10" cy="10" r="2" /></svg>
          </div>
        </div>
        <div className="divide-y divide-[#ddd] rounded bg-white shadow-[0_0_0_2px_rgba(0,0,0,.1)]">
          <div className={ctl}><svg className="size-[29px]" viewBox="0 0 29 29" fill="#333"><path d="M14.500 8.500c-.75 0-1.500.75-1.500 1.500v3h-3c-.75 0-1.500.75-1.500 1.500S9.250 16 10 16h3v3c0 .75.75 1.500 1.500 1.500S16 19.750 16 19v-3h3c.75 0 1.500-.75 1.500-1.500S19.750 13 19 13h-3v-3c0-.75-.75-1.500-1.500-1.500" /></svg></div>
          <div className={ctl}><svg className="size-[29px]" viewBox="0 0 29 29" fill="#333"><path d="M10 13c-.75 0-1.500.75-1.500 1.500S9.250 16 10 16h9c.75 0 1.500-.75 1.500-1.500S19.750 13 19 13z" /></svg></div>
          <div className={ctl}><svg className="size-[29px]" viewBox="0 0 29 29"><path d="m10.500 14 4-8 4 8z" fill="#333" /><path d="m10.500 16 4 8 4-8z" fill="#ccc" /></svg></div>
        </div>
      </div>
      <div className="absolute bottom-[10px] right-[10px] flex h-6 w-[412px] items-center rounded-xl bg-white pl-2 font-['Liberation_Sans',sans-serif] text-[12px] text-[#404040]">
        <span className="w-[376px] whitespace-nowrap tracking-[0.02px]">MapLibre | OpenFreeMap © OpenMapTiles <span className="text-black">Data from</span> OpenStreetMap</span>
        <span className="ml-auto flex size-6 items-center justify-center rounded-full bg-[#f2f2f2]">
          <svg className="size-3.5" viewBox="0 0 14 14"><circle cx="7" cy="7" r="7" /><circle cx="7" cy="3.500" r="1.200" fill="#fff" /><path d="M5 5.800h3v4h1v1.200H5V9.800h1V7H5Z" fill="#fff" /></svg>
        </span>
      </div>
    </div>
  );
}

/* ---------- page ---------- */

export default function App() {
  return (
    <div className="flex h-[1080px] w-[1920px] flex-col overflow-hidden bg-[#2a2422] font-['Inter',sans-serif]">
      <MenuBar />
      <div className="flex grow flex-col bg-[linear-gradient(#e8e4e1_0_50%,#000_50%)]">
        <div className="flex grow flex-col overflow-hidden rounded-[10px] bg-white">
          <header className="border-y border-black">
            <TabBar />
            <Toolbar />
          </header>
          <main className="mx-auto w-[880px] pt-[39px] text-[15.700px] leading-6 tracking-[-0.110px] text-[#1d2322]">
            <h1 className="text-[35px] font-bold leading-[42px] tracking-[-1.150px]">Harita</h1>
            <p className="mt-[7px]">share geospatial data on maps!</p>
            <section className="mt-2 overflow-hidden rounded-lg">
              <MapView />
              <div className="rounded-b-lg border-x border-b border-[#d3d5d5] px-[15px] pb-[15px] pt-4">
                <p className="w-[860px]"><strong className="font-bold tracking-[-0.050px]">This example map</strong> displays all the branches of the Migros supermarket chain in Turkey. Hover over the the points to<br />see the properties of the features, and click to freeze the popup.</p>
              </div>
            </section>
            <hr className="mt-5 border-[#d0d3d3]" />
            <p className="mt-5">Would you like to create such maps?</p>
            <button className="mx-auto mt-[7px] flex h-8 w-[440px] items-center justify-center rounded-[3px] bg-[#269966] text-[14px] font-medium tracking-[-0.060px] text-white">
              Log in with Google (requires a Dartmouth account)
            </button>
          </main>
        </div>
      </div>
    </div>
  );
}
